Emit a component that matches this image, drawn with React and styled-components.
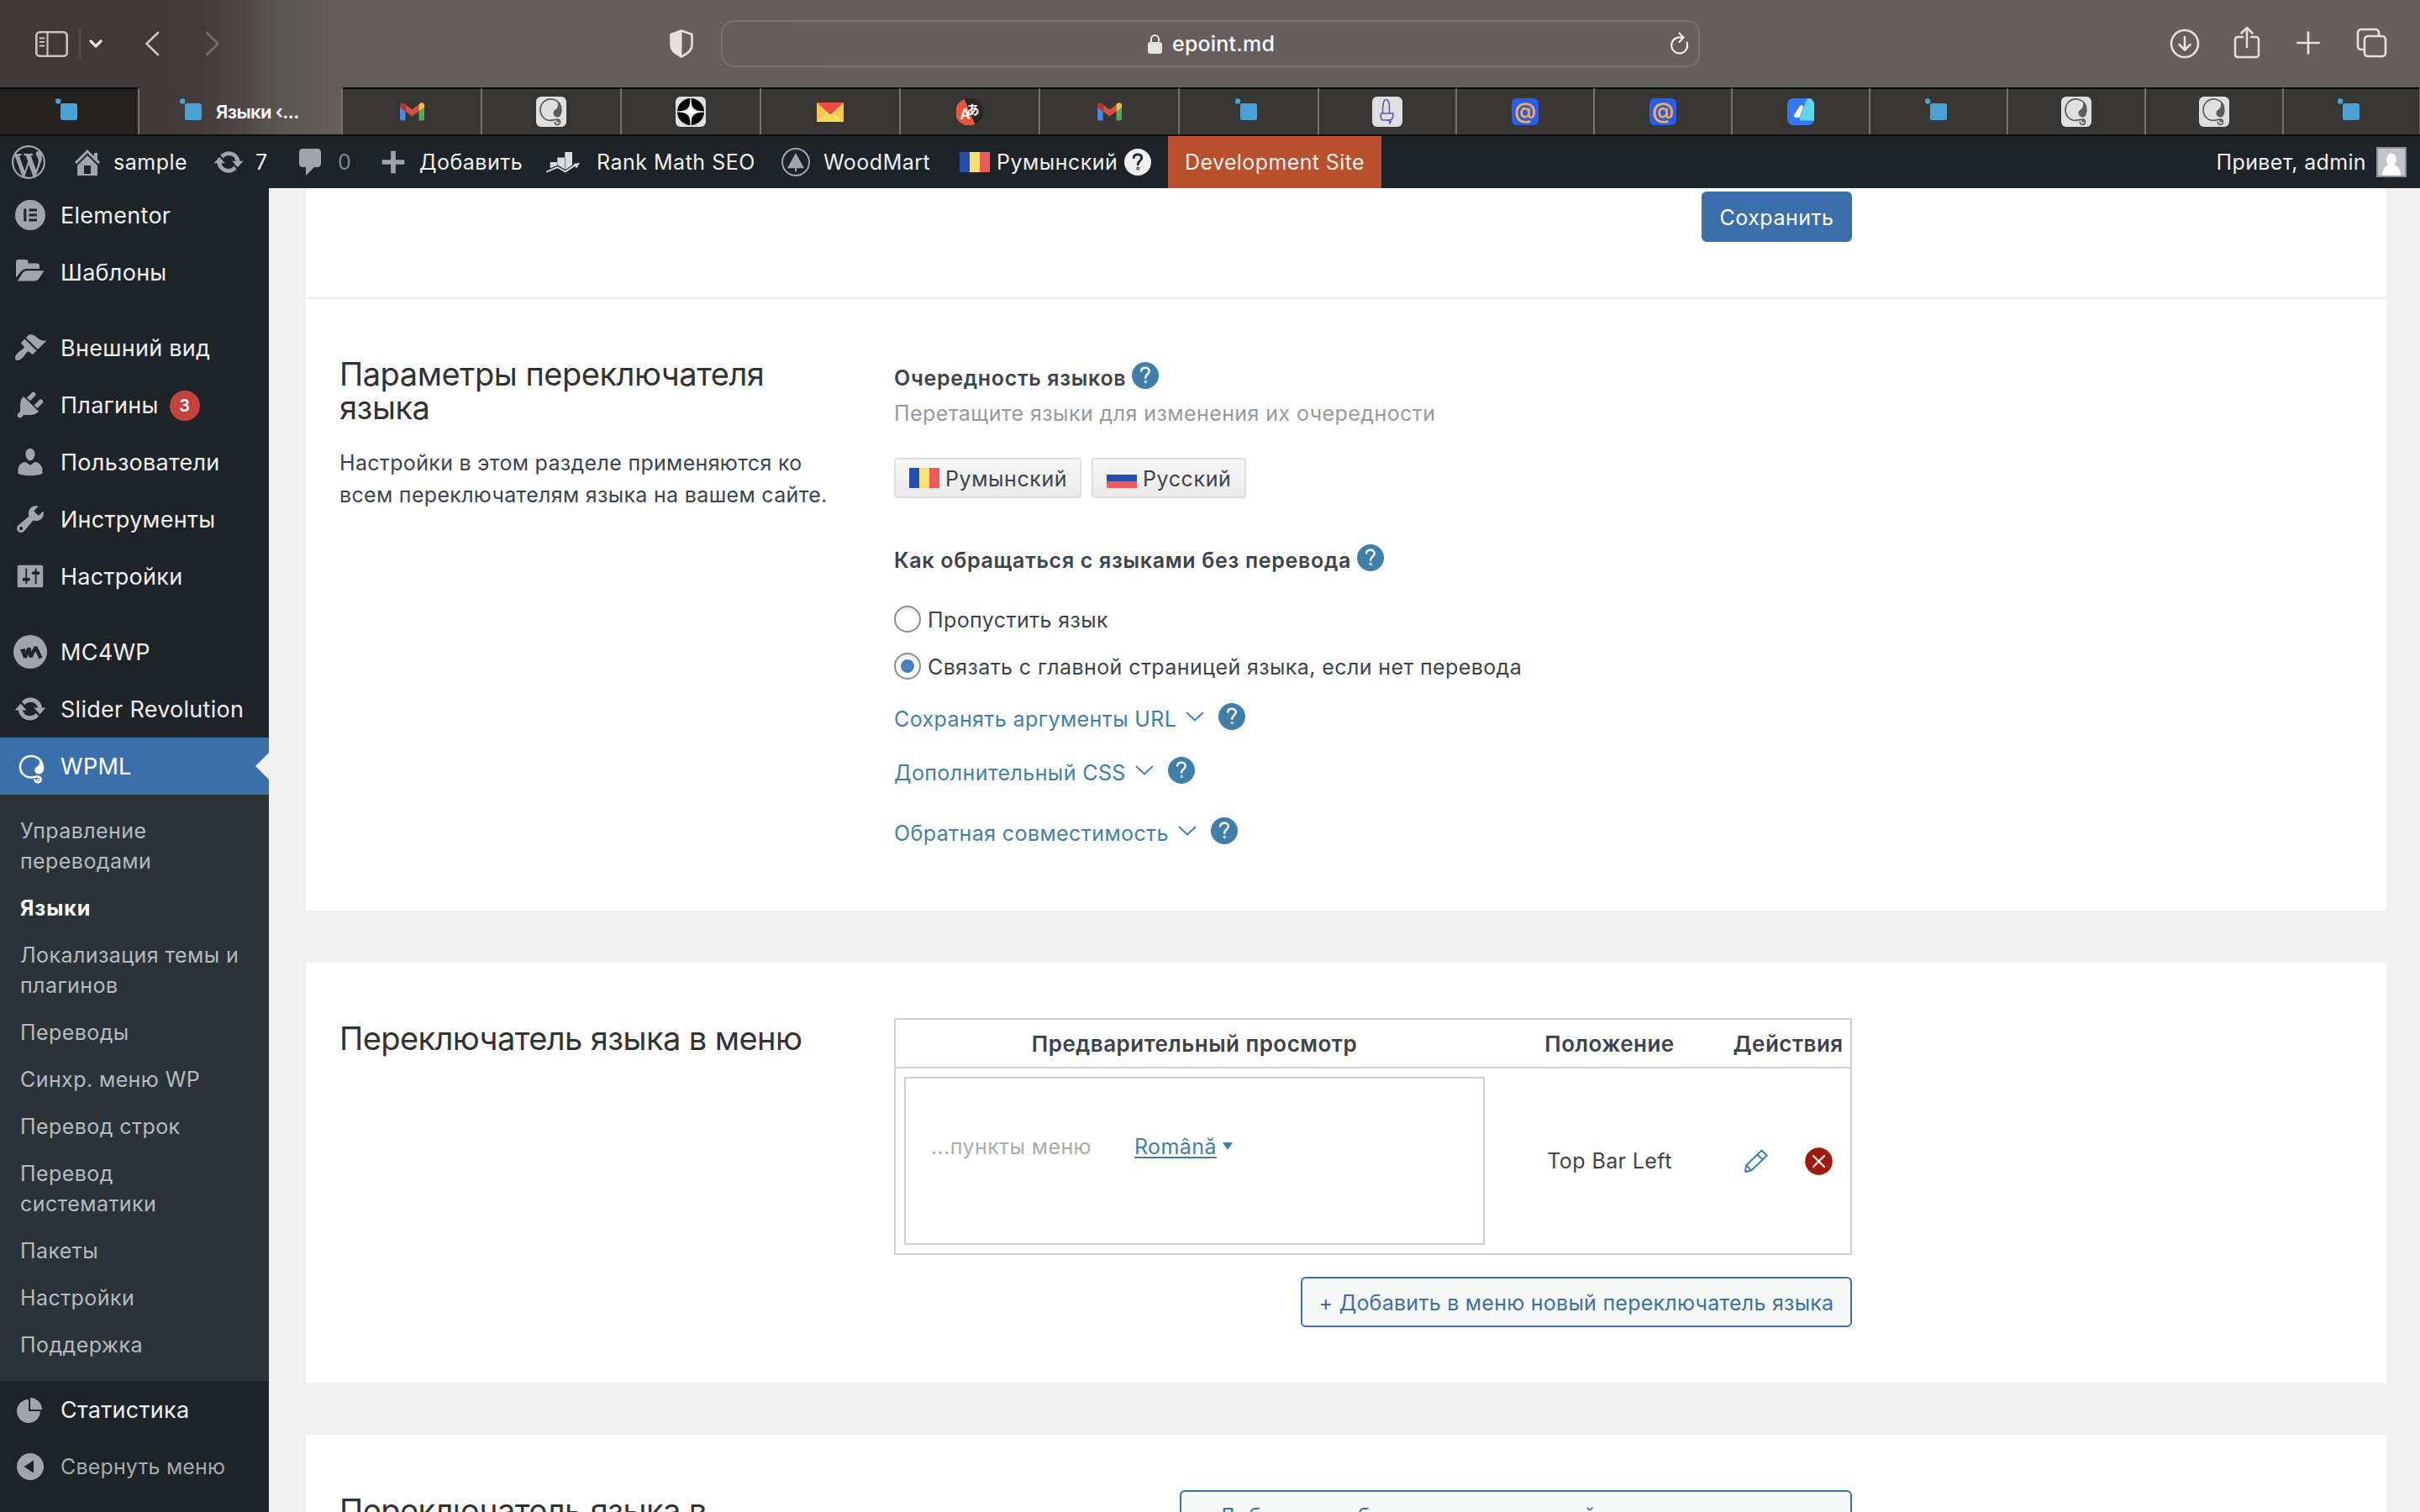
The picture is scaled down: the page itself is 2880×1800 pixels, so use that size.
import React from "react";
import styled, { createGlobalStyle, css } from "styled-components";

const GlobalStyle = createGlobalStyle`
  *, *::before, *::after { box-sizing: border-box; }
  html, body { margin: 0; padding: 0; background: #efefef; }
  body {
    font-family: Inter, Roboto, "Liberation Sans", sans-serif;
    font-size: 25px;
    letter-spacing: 0.4px;
    color: #3c434a;
    overflow: hidden;
  }
  svg { display: block; flex: none; }
  h2, p { margin: 0; }
`;

/* ---------- page shell ---------- */

const Page = styled.div`
  display: flex;
  flex-direction: column;
  width: 2880px;
  height: 1800px;
  overflow: hidden;
`;

const Chrome = styled.div`
  display: flex;
  flex-direction: column;
  height: 162px;
  background: linear-gradient(
    90deg,
    #3f3a39 0,
    #3f3a39 190px,
    #433c3b 240px,
    #4a4442 275px,
    #555150 315px,
    #5c5854 350px,
    #605b58 385px,
    #655e5d 430px,
    #665f5e 100%
  );
  border-bottom: 2px solid #0c0d0e;
`;

const Toolbar = styled.div`
  display: flex;
  align-items: center;
  height: 104px;
  padding-left: 42px;
  color: #e6e0e0;
`;

const ToolIcon = styled.div`
  display: flex;
  flex: none;
  margin-left: ${(p) => p.$gap || 0}px;
  color: ${(p) => p.$tone || "#e6e0e0"};
`;

const ToolDivider = styled.div`
  width: 2px;
  height: 36px;
  margin-left: 13px;
  background: #55504f;
`;

const AddressField = styled.div`
  display: flex;
  flex: none;
  align-items: center;
  width: 1165px;
  height: 56px;
  margin-left: 33px;
  padding-left: 506px;
  padding-right: 10px;
  border: 2px solid #777170;
  border-radius: 15px;
  color: #fff;
`;

const Address = styled.span`
  flex: 1;
  margin-left: 12px;
  font-weight: 500;
  letter-spacing: 0.2px;
`;

const TabStrip = styled.div`
  display: flex;
  height: 56px;
`;

const Tab = styled.div`
  display: flex;
  align-items: center;
  justify-content: ${(p) => (p.$active ? "flex-start" : "center")};
  width: ${(p) => p.$w}px;
  height: 56px;
  padding-left: ${(p) => (p.$active ? 48 : 0)}px;
  border-right: ${(p) => (p.$last ? 0 : 2)}px solid #777170;
  border-top: 2px solid ${(p) => (p.$active ? "transparent" : "#0c0b0b")};
  background: ${(p) => (p.$active ? "transparent" : p.$dark ? "#232120" : "#383634")};
`;

const TabTitle = styled.span`
  margin-left: 10px;
  color: #fff;
  font-size: 22px;
  font-weight: 600;
  letter-spacing: -0.6px;
  white-space: nowrap;
`;

/* ---------- admin bar ---------- */

const AdminBar = styled.div`
  display: flex;
  align-items: center;
  height: 62px;
  padding-left: 14px;
  padding-right: 16px;
  background: #1d2327;
  color: #f0f0f1;
  letter-spacing: 0.5px;
`;

const BarIcon = styled.div`
  display: flex;
  justify-content: center;
  width: ${(p) => p.$w}px;
  margin-left: ${(p) => p.$gap || 0}px;
  color: #a1a5aa;
`;

const BarText = styled.span`
  width: ${(p) => p.$w}px;
  margin-left: ${(p) => p.$gap}px;
  white-space: nowrap;
  color: ${(p) => (p.$dim ? "#85898c" : "#f0f0f1")};
`;

const DevSite = styled.div`
  display: flex;
  align-items: center;
  width: 254px;
  height: 62px;
  margin-left: 20px;
  padding-left: 20px;
  background: #ba4f2d;
  white-space: nowrap;
  letter-spacing: 0.4px;
`;

const Greeting = styled.span`
  margin-left: auto;
  margin-right: 12px;
  letter-spacing: 0.36px;
`;

const Avatar = styled.div`
  width: 36px;
  height: 36px;
  border: 2px solid #8c8f94;
  background: #c3c4c7;
`;

/* ---------- sidebar ---------- */

const Body = styled.div`
  display: flex;
  height: 1576px;
`;

const Sidebar = styled.nav`
  display: flex;
  flex: none;
  flex-direction: column;
  width: 320px;
  height: 1576px;
  background: #1d2327;
  overflow: hidden;
`;

const MenuGroup = styled.div`
  display: flex;
  flex-direction: column;
  margin-bottom: ${(p) => p.$after || 0}px;
  margin-top: ${(p) => p.$before || 0}px;
`;

const MenuRow = styled.div`
  position: relative;
  display: flex;
  align-items: center;
  flex: none;
  height: 68px;
  color: ${(p) => (p.$muted ? "#a7aaad" : p.$active ? "#fff" : "#f0f0f1")};
  background: ${(p) => (p.$active ? "#3b6fab" : "transparent")};
  font-size: ${(p) => (p.$muted ? 25 : 27)}px;
  letter-spacing: ${(p) => (p.$muted ? 0.16 : 0.28)}px;
  white-space: nowrap;
  ${(p) =>
    p.$active &&
    css`
      &::after {
        content: "";
        position: absolute;
        right: 0;
        top: 18px;
        border: 16px solid transparent;
        border-left-width: 0;
        border-right-color: #efefef;
      }
    `}
`;

const MenuIcon = styled.div`
  display: flex;
  align-items: center;
  justify-content: center;
  width: 72px;
  padding-top: ${(p) => (p.$active ? 9 : 0)}px;
  padding-left: ${(p) => (p.$active ? 2 : 0)}px;
  color: ${(p) => (p.$active ? "#fff" : "#a1a5aa")};
`;

const CountBadge = styled.span`
  display: flex;
  align-items: center;
  justify-content: center;
  width: 36px;
  height: 36px;
  margin-left: 13px;
  margin-top: 2px;
  border-radius: 50%;
  background: #c6423f;
  color: #fff;
  font-size: 20px;
  font-weight: 600;
  letter-spacing: 0;
`;

const SubMenu = styled.div`
  display: flex;
  flex: none;
  flex-direction: column;
  height: 698px;
  padding: 15px 0 0;
  background: #2c3338;
`;

const SubItem = styled.span`
  padding: 10px 24px;
  line-height: 36px;
  white-space: pre-line;
  color: ${(p) => (p.$current ? "#fff" : "#b6bbbf")};
  font-weight: ${(p) => (p.$current ? 700 : 400)};
  letter-spacing: ${(p) => (p.$current ? 0.9 : 0.42)}px;
`;

/* ---------- content ---------- */

const Content = styled.main`
  display: flex;
  flex: 1;
  flex-direction: column;
  gap: 62px;
  padding-left: 44px;
  padding-right: 40px;
`;

const Card = styled.section`
  flex: none;
  width: 2476px;
  height: ${(p) => p.$h}px;
  background: #fff;
`;

const SaveRow = styled.div`
  display: flex;
  justify-content: flex-end;
  height: 132px;
  padding-top: 4px;
  padding-right: 636px;
  border-bottom: 2px solid #ebebeb;
`;

const Button = styled.button`
  display: flex;
  align-items: center;
  justify-content: center;
  width: ${(p) => p.$w}px;
  height: 60px;
  padding: 2px 0 0;
  border: 2px solid #3b6fab;
  border-radius: 6px;
  background: ${(p) => (p.$primary ? "#3b6fab" : "#f6f7f7")};
  color: ${(p) => (p.$primary ? "#fff" : "#3b6fab")};
  font: inherit;
  letter-spacing: ${(p) => (p.$primary ? 0.5 : 0.25)}px;
  white-space: nowrap;
`;

const Section = styled.div`
  display: grid;
  grid-template-columns: 660px 1140px;
  align-items: start;
  padding-left: 40px;
`;

const Intro = styled.div`
  padding-top: ${(p) => p.$top}px;
`;

const Heading = styled.h2`
  color: #323232;
  font-size: 38px;
  font-weight: 400;
  line-height: 40px;
  letter-spacing: ${(p) => p.$tracking || -0.58}px;
  white-space: pre-line;
`;

const Lead = styled.p`
  margin-top: 27px;
  line-height: 38px;
  letter-spacing: 0.32px;
  white-space: pre-line;
`;

const Fields = styled.div`
  display: flex;
  flex-direction: column;
  align-items: ${(p) => (p.$end ? "flex-end" : "flex-start")};
  padding-top: ${(p) => p.$top}px;
`;

const FieldLine = styled.div`
  display: flex;
  align-items: center;
  height: 40px;
  margin-top: ${(p) => p.$gap || 0}px;
  white-space: nowrap;
`;

const Label = styled.span`
  font-weight: 600;
  letter-spacing: 0.69px;
`;

const Hint = styled.span`
  color: #999;
  letter-spacing: 0.43px;
`;

const HelpDot = styled.span`
  display: flex;
  align-items: center;
  justify-content: center;
  width: 32px;
  height: 32px;
  margin-left: ${(p) => p.$gap}px;
  margin-bottom: ${(p) => p.$lift}px;
  border-radius: 50%;
  background: ${(p) => p.$bg || "#407fab"};
  color: ${(p) => p.$fg || "#fff"};
`;

const LanguageList = styled.div`
  display: flex;
  gap: 12px;
  margin-top: 33px;
`;

const LanguageChip = styled.div`
  display: flex;
  align-items: center;
  width: ${(p) => p.$w}px;
  height: 48px;
  padding-left: 16px;
  gap: 7px;
  border: 2px solid #dedede;
  border-radius: 4px;
  background: linear-gradient(180deg, #f9f9f9, #e9e9e9);
  letter-spacing: 0.6px;
  white-space: nowrap;
`;

const ChipName = styled.span`
  padding-top: 2px;
`;

const Flag = styled.span`
  flex: none;
  width: 36px;
  height: 24px;
  background: ${(p) =>
    p.$code === "ro"
      ? "linear-gradient(90deg, #2350b0 0 12px, #fae26e 12px 24px, #ef5b5b 24px)"
      : "linear-gradient(180deg, #f0f0f0 0 8px, #2350b0 8px 16px, #ef5b5b 16px)"};
`;

const Radio = styled.span`
  display: flex;
  align-items: center;
  justify-content: center;
  width: 32px;
  height: 32px;
  margin-right: 8px;
  margin-bottom: 2px;
  border: 2px solid #8c8f94;
  border-radius: 50%;
  box-shadow: inset 0 2px 4px rgba(0, 0, 0, 0.1);
  &::after {
    content: "";
    width: 16px;
    height: 16px;
    border-radius: 50%;
    background: ${(p) => (p.$on ? "#4a7fc3" : "transparent")};
  }
`;

const LinkText = styled.span`
  color: #407fab;
`;

const Expand = styled.span`
  margin-left: 11px;
  margin-bottom: 7px;
  color: #407fab;
`;

const Table = styled.div`
  display: grid;
  grid-template-columns: 711px 277px 148px;
  grid-template-rows: 58px 220px;
  width: 1140px;
  height: 282px;
  border: 2px solid #d0d0d0;
`;

const HeadCell = styled.div`
  display: flex;
  align-items: center;
  justify-content: center;
  border-bottom: 2px solid #d0d0d0;
  font-weight: 600;
  font-size: 26px;
  letter-spacing: 0.48px;
`;

const Cell = styled.div`
  display: flex;
  align-items: center;
  justify-content: center;
  gap: ${(p) => p.$gap || 0}px;
`;

const Preview = styled.div`
  display: flex;
  align-items: flex-start;
  width: 691px;
  height: 200px;
  padding-top: 62px;
  padding-left: 30px;
  border: 2px solid #d0d0d0;
  line-height: 38px;
`;

const PreviewItems = styled.span`
  width: 242px;
  color: #aaa;
`;

const PreviewLink = styled.span`
  color: #407fab;
  text-decoration: underline;
  text-decoration-thickness: 2px;
  text-underline-offset: 3px;
`;

const Caret = styled.span`
  margin-left: 7px;
  margin-top: 14px;
  border: 6px solid transparent;
  border-top: 9px solid #407fab;
  border-bottom-width: 0;
`;

const AddRow = styled.div`
  margin-top: ${(p) => p.$gap}px;
`;

/* ---------- drawings ---------- */

const Dash = ({ d, size = 40 }) => (
  <svg width={size} height={size} viewBox="0 0 20 20" fill="currentColor">
    <path d={d} />
  </svg>
);

const dash = {
  wordpress:
    "M20 10c0-5.51-4.49-10-10-10C4.48 0 0 4.49 0 10c0 5.52 4.48 10 10 10 5.51 0 10-4.48 10-10zM7.78 15.37L4.37 6.22c.55-.02 1.17-.08 1.17-.08.5-.06.44-1.13-.06-1.11 0 0-1.45.11-2.37.11-.18 0-.37 0-.58-.01C4.12 2.69 6.87 1.11 10 1.11c2.33 0 4.45.87 6.05 2.34-.68-.11-1.65.39-1.65 1.58 0 .74.45 1.36.9 2.1.35.61.55 1.36.55 2.46 0 1.49-1.4 5-1.4 5l-3.03-8.37c.54-.02.82-.17.82-.17.5-.05.44-1.25-.06-1.22 0 0-1.44.12-2.38.12-.87 0-2.33-.12-2.33-.12-.5-.03-.56 1.2-.06 1.22l.92.08 1.26 3.41zM17.41 10c.24-.64.74-1.87.43-4.25.7 1.29 1.05 2.71 1.05 4.25 0 3.29-1.73 6.24-4.4 7.78.97-2.59 1.94-5.2 2.92-7.78zM6.1 18.09C3.12 16.65 1.11 13.53 1.11 10c0-1.3.23-2.48.72-3.59C3.25 10.3 4.67 14.2 6.1 18.09zm4.03-6.63l2.58 6.98c-.86.29-1.76.45-2.71.45-.79 0-1.57-.11-2.29-.33.81-2.38 1.62-4.74 2.42-7.1z",
  home: "M16 8.5l1.53 1.53-1.06 1.06L10 4.6l-6.47 6.49-1.06-1.06L10 2.5l4 4v-2h2v4zm-6-2.46l6 5.99V18H4v-5.97zM12 17v-5H8v5h4z",
  update:
    "M10.2 3.28c3.53 0 6.43 2.61 6.92 6h2.08l-3.5 4-3.5-4h2.32c-.45-1.97-2.21-3.45-4.32-3.45-1.45 0-2.73.71-3.54 1.78L4.95 5.66C6.23 4.2 8.11 3.28 10.2 3.28zm-.4 13.44c-3.52 0-6.43-2.61-6.92-6H.8l3.5-4c1.17 1.33 2.33 2.67 3.5 4H5.48c.45 1.97 2.21 3.45 4.32 3.45 1.45 0 2.73-.71 3.54-1.78l1.71 1.95c-1.28 1.46-3.15 2.38-5.25 2.38z",
  comment: "M5 2h9c1.1 0 2 .9 2 2v7c0 1.1-.9 2-2 2h-2l-5 5v-5H5c-1.1 0-2-.9-2-2V4c0-1.1.9-2 2-2z",
  plus: "M17 8.5v3h-5.5V17h-3v-5.5H3v-3h5.5V3h3v5.5z",
  appearance:
    "M14.48 11.06L7.41 3.99l1.5-1.5c.5-.56 2.3-.47 3.51.32 1.21.8 1.43 1.28 2.91 2.1 1.18.64 2.45 1.26 4.45.85zm-.71.71L6.7 4.7 4.93 6.47c-.39.39-.39 1.02 0 1.41l1.06 1.06c.39.39.39 1.03 0 1.42-.6.6-1.43 1.11-2.21 1.69-.35.26-.7.53-1.01.84C1.43 14.23.4 16.08 1.4 17.07c.99 1 2.84-.03 4.18-1.36.31-.31.58-.66.85-1.02.57-.78 1.08-1.61 1.69-2.21.39-.39 1.02-.39 1.41 0l1.06 1.06c.39.39 1.02.39 1.41 0z",
  plugins:
    "M13.11 4.36L9.87 7.6 8 5.73l3.24-3.24c.35-.34 1.05-.2 1.56.32.52.51.66 1.21.31 1.55zm-8 1.77l.91-1.12 9.01 9.01-1.19.84c-.71.71-2.63 1.16-3.82 1.16H6.14L4.9 17.26c-.59.59-1.54.59-2.12 0-.59-.58-.59-1.53 0-2.12l1.24-1.24v-3.88c0-1.13.4-3.19 1.09-3.89zm7.26 3.97l3.24-3.24c.34-.35 1.04-.21 1.55.31.52.51.66 1.21.31 1.55l-3.24 3.25z",
  users:
    "M10 9.25c-2.27 0-2.73-3.44-2.73-3.44C7 4.02 7.82 2 9.97 2c2.16 0 2.98 2.02 2.71 3.81 0 0-.41 3.44-2.68 3.44zm0 2.57L12.72 10c2.39 0 4.52 2.33 4.52 4.53v2.49s-3.65 1.13-7.24 1.13c-3.65 0-7.24-1.13-7.24-1.13v-2.49c0-2.25 1.94-4.48 4.47-4.48z",
  tools:
    "M16.68 9.77c-1.34 1.34-3.3 1.67-4.95.99l-5.41 6.52c-.99.99-2.59.99-3.58 0s-.99-2.59 0-3.57l6.52-5.42c-.68-1.65-.35-3.61.99-4.95 1.28-1.28 3.12-1.62 4.72-1.06l-2.89 2.89 2.82 2.82 2.86-2.87c.53 1.58.18 3.39-1.08 4.65zM3.81 16.21c.4.39 1.04.39 1.43 0 .4-.4.4-1.04 0-1.43-.39-.4-1.03-.4-1.43 0-.39.39-.39 1.03 0 1.43z",
  settings:
    "M18 16V4c0-.55-.45-1-1-1H3c-.55 0-1 .45-1 1v12c0 .55.45 1 1 1h14c.55 0 1-.45 1-1zM8 11h1c.55 0 1 .45 1 1s-.45 1-1 1H8v1.5c0 .28-.22.5-.5.5s-.5-.22-.5-.5V13H6c-.55 0-1-.45-1-1s.45-1 1-1h1V5.5c0-.28.22-.5.5-.5s.5.22.5.5V11zm5-2h-1c-.55 0-1-.45-1-1s.45-1 1-1h1V5.5c0-.28.22-.5.5-.5s.5.22.5.5V7h1c.55 0 1 .45 1 1s-.45 1-1 1h-1v5.5c0 .28-.22.5-.5.5s-.5-.22-.5-.5V9z",
  pie: "M10 10V3c3.87 0 7 3.13 7 7h-7zM9 4v7h7c0 3.87-3.13 7-7 7s-7-3.13-7-7 3.13-7 7-7z",
};

const ElementorIcon = () => (
  <svg width="36" height="36" viewBox="0 0 36 36">
    <circle cx="18" cy="18" r="18" fill="currentColor" />
    <path d="M10.3 10.5h3v15h-3zM16.5 10.5h9.4v3h-9.4zM16.5 16.5h9.4v3h-9.4zM16.5 22.5h9.4v3h-9.4z" fill="#1d2327" />
  </svg>
);

const FolderIcon = () => (
  <svg width="34" height="30" viewBox="0 0 34 30" fill="currentColor">
    <path d="M0 3a3 3 0 0 1 3-3h8.500a3 3 0 0 1 3 3v1.500H25a3 3 0 0 1 3 3V11H12.500a8 8 0 0 0-6 2.600L0 21.500z" />
    <path d="M12.600 13.200H33.500L27.500 22.500a7 7 0 0 1-5.800 3H1.800L8.200 15.600a5.500 5.500 0 0 1 4.400-2.400z" />
  </svg>
);

const McIcon = () => (
  <svg width="40" height="40" viewBox="0 0 40 40">
    <circle cx="20" cy="20" r="20" fill="currentColor" />
    <path
      d="M10.500 17.500l3.500 9 4.500-11 2 10.500 6-11.500 6 13"
      fill="none"
      stroke="#1d2327"
      strokeWidth="4.200"
      strokeLinejoin="bevel"
      strokeLinecap="butt"
    />
    <path d="M7 17.500l6.500-1.500 2 4z" fill="#1d2327" />
  </svg>
);

const Swirl = ({ size, color, blob }) => (
  <svg width={size} height={size} viewBox="0 0 36 36" fill="none" stroke={color} strokeLinecap="round">
    <path d="M29.500 12C28 6.500 23 2.900 17.500 2.900 10.300 2.900 5 8.800 5 15.800S10.200 28.400 17 28.400c3.500 0 6-1.300 8.500-1.300a3.100 3.100 0 1 1-3.200 3.600" strokeWidth="1.700" />
    <path d="M26 5.500c3.800 3.300 5.300 8.500 4.300 13.800-.8 4-3 5.700-5.600 5.200-2.800-.5-4.500-2.600-4.200-5.400.4-3.500 4.500-3.800 5.300-7.300.5-2 .3-4.200.2-6.300z" fill={blob} stroke="none" />
    <circle cx="25.800" cy="29.300" r="1.400" fill={blob} stroke="none" />
  </svg>
);

const WpmlMenuIcon = () => (
  <svg width="31" height="37" viewBox="1 0 32 38" fill="none" stroke="#fff" strokeLinecap="round">
    <path d="M30 11C28 5.500 22.500 2 16.500 2 9 2 3 8 3 15.300 3 22.700 9 28.300 16.500 28.300c4 0 6.500-1.600 9.500-.8 3.200 1 3.500 4.800 1 6.200-2.400 1.300-5.500.2-6-2.200" strokeWidth="2.600" />
    <path d="M27 6c4.500 3.500 6 8.500 5 13-1 4-3.500 5.500-6.500 5.200-3.200-.4-5-2.800-4.500-5.700.6-3.400 4.500-3.500 5.500-7 .5-1.800.5-3.700.5-5.500z" fill="#fff" stroke="none" />
    <circle cx="25" cy="31" r="1.500" fill="#fff" stroke="none" />
  </svg>
);

const CollapseIcon = () => (
  <svg width="32" height="32" viewBox="0 0 32 32">
    <circle cx="16" cy="16" r="16" fill="currentColor" />
    <path d="M20 8.500v15L8.500 16z" fill="#1d2327" />
  </svg>
);

const RankMathIcon = () => (
  <svg width="40" height="25" viewBox="0 0 40 25" fill="#dcdcdd">
    <path d="M4.700 12h8.600V6.500h9V0H31v15.500L22.800 21l-9-5.400-9.100 3.600z" />
    <path d="M13.300 12v4M22.600 6.500v14" stroke="#1d2327" strokeWidth="0.500" />
    <path d="M0 23.700l13.500-5.700 9.300 5.400 12-8" fill="none" stroke="#dcdcdd" strokeWidth="1.900" />
    <path d="M40 12.800l-7.500 1.300 3.500 5.300z" />
  </svg>
);

const WoodMartIcon = () => (
  <svg width="34" height="34" viewBox="0 0 34 34">
    <circle cx="17" cy="17" r="16" fill="none" stroke="currentColor" strokeWidth="2" />
    <path d="M17 6l10 18.300h-9v3.900h-2v-3.900H7z" fill="currentColor" />
  </svg>
);

const QuestionMark = ({ weight = 2.4 }) => (
  <svg width="16" height="22" viewBox="0 0 16 22" fill="none" stroke="currentColor" strokeWidth={weight} strokeLinecap="round">
    <path d="M3.200 5.600C3.400 3.200 5.300 1.800 8 1.800c2.800 0 4.800 1.600 4.800 4 0 3.800-4.600 3.700-4.600 8" />
    <circle cx="8.200" cy="18.500" r="0.500" />
  </svg>
);

const SidebarToggleIcon = () => (
  <svg width="39" height="31" viewBox="0 0 39 31" fill="none" stroke="currentColor">
    <rect x="1.300" y="1.300" width="36.400" height="28.400" rx="4" strokeWidth="2.600" />
    <path d="M14.500 1.500v28" strokeWidth="2.200" />
    <path d="M5.500 8.500h5M5.500 13h5M5.500 17.500h5" strokeWidth="1.800" strokeLinecap="round" />
  </svg>
);

const Stroke = ({ w, h, d, weight = 3 }) => (
  <svg width={w} height={h} viewBox={`0 0 ${w} ${h}`} fill="none" stroke="currentColor" strokeWidth={weight} strokeLinecap="round" strokeLinejoin="round">
    <path d={d} />
  </svg>
);

const ShieldIcon = () => (
  <svg width="28" height="34" viewBox="0 0 28 34">
    <path d="M14 1.500L26.500 6v12.500c0 6-5 10.500-12.500 14-7.500-3.500-12.500-8-12.500-14V6z" fill="none" stroke="currentColor" strokeWidth="2.600" strokeLinejoin="round" />
    <path d="M14.500 1.500v31C6.500 29 1.500 24.500 1.500 18.500V6z" fill="currentColor" />
  </svg>
);

const LockIcon = () => (
  <svg width="17" height="24" viewBox="0 0 17 24" fill="#e6e4e4">
    <rect x="0" y="10" width="17" height="14" rx="3" />
    <path d="M4 11V6.500a4.500 4.500 0 0 1 9 0V11" fill="none" stroke="#e6e4e4" strokeWidth="2" />
  </svg>
);

const CubeIcon = () => (
  <svg width="33" height="32" viewBox="0 0 33 32" fill="#4ba1d3">
    <rect x="6" y="6" width="20" height="20" rx="2.500" />
    <circle cx="3.200" cy="3.500" r="3.200" />
  </svg>
);

const GmailIcon = () => (
  <svg width="29" height="22" viewBox="0 0 29 22">
    <path d="M0 5.500l6.500 5V21.500H2a2 2 0 0 1-2-2z" fill="#4f86ec" />
    <path d="M29 5.500l-6.500 5V21.500H27a2 2 0 0 0 2-2z" fill="#58a55c" />
    <path d="M6.500 2.500l8 6 8-6v8l-8 6-8-6z" fill="#d84f3f" />
    <path d="M0 6V3.300C0 .5 3-.8 5 .9l1.500 1.200v8.600z" fill="#b8342a" />
    <path d="M29 6V3.300c0-2.800-3-4.100-5-2.400l-1.500 1.200v8.600z" fill="#f1bf42" />
  </svg>
);

const Tile = styled.div`
  display: flex;
  align-items: center;
  justify-content: center;
  width: ${(p) => p.$s || 36}px;
  height: ${(p) => p.$s || 36}px;
  border-radius: 6px;
  background: ${(p) => p.$bg || "#dfdfdf"};
`;

const StarIcon = () => (
  <svg width="32" height="32" viewBox="0 0 32 32">
    <circle cx="16" cy="16" r="16" fill="#000" />
    <path d="M16 0h.6c.1 7.500.8 9.800 3 11.900 2 2 4.800 3.300 12.400 3.500v1.200c-7.600.2-10.400 1.500-12.400 3.500-2.200 2.100-2.900 4.400-3 11.900h-1.200c-.1-7.500-.8-9.800-3-11.900-2-2-4.800-3.300-12.400-3.500v-1.200c7.600-.2 10.400-1.500 12.400-3.500 2.200-2.100 2.900-4.400 3-11.900z" fill="#fff" />
  </svg>
);

const EnvelopeIcon = () => (
  <svg width="32" height="23" viewBox="0 0 32 23">
    <rect width="32" height="23" fill="#f6c64f" />
    <path d="M0 23l13-12h6l13 12z" fill="#f9da5c" />
    <path d="M0 0h32L16 14.500z" fill="#ec4a3f" />
  </svg>
);

const TranslateIcon = () => (
  <svg width="32" height="32" viewBox="0 0 32 32">
    <circle cx="16" cy="16" r="16" fill="#282727" />
    <path d="M9.800 1.300L22.200 30.700A16 16 0 1 1 9.800 1.300z" fill="#e9573a" />
    <text x="4.500" y="24.500" fontFamily="Inter, sans-serif" fontWeight="600" fontSize="17" fill="#fff">A</text>
    <text x="12.500" y="18.500" fontFamily="'Noto Sans CJK JP', sans-serif" fontWeight="700" fontSize="15" fill="#fff">あ</text>
  </svg>
);

const ScribbleIcon = () => (
  <svg width="18" height="32" viewBox="0 0 18 32" fill="none" stroke="#6a53b5" strokeWidth="1.600" strokeLinejoin="round">
    <path d="M3.500 17.500C3.500 10 4 4 6 2c3-1.800 5.500 2 5.500 7.500v8.500H2c-1.300 0-1.300 8 2 8h7.500c3 0 4.500-3 4.500-8h-4.500" />
    <path d="M8.500 26l5 1.500-2.500 3" />
  </svg>
);

const At = styled.span`
  color: #f6b13c;
  font-size: 26px;
  font-weight: 600;
  line-height: 30px;
  letter-spacing: 0;
  margin-bottom: 3px;
`;

const BlueTileIcon = () => (
  <svg width="32" height="32" viewBox="0 0 32 32">
    <rect width="32" height="32" rx="7" fill="#3478f6" />
    <path d="M26 0c4 1 6 4 6 8v18.500H17.500c-2.500 0-3-1.500-2.500-3.500L21.500 5c1-3 2.500-4.500 4.500-5z" fill="#5fd4ea" />
    <path d="M15.500 8.500c2-.8 3.500 0 3.300 2.500L14.500 23h-4c-2 0-3-1.500-2.300-3.500z" fill="#fff" />
  </svg>
);

const PersonIcon = () => (
  <svg width="32" height="32" viewBox="0 0 32 32" fill="#fff">
    <ellipse cx="16" cy="13" rx="6" ry="7.500" />
    <path d="M5 32c0-7 4-12 8-13h6c4 1 8 6 8 13z" />
  </svg>
);

const PencilIcon = () => (
  <svg width="28" height="28" viewBox="0 0 28 28" fill="none" stroke="#407fab" strokeWidth="2" strokeLinejoin="round">
    <path d="M20.500 1.500l6.300 6.300L8 25.500 1 27l1-7.500z" />
    <path d="M15.500 6.500l6.300 6.300M2.500 19.500l6 6" />
  </svg>
);

const RemoveIcon = () => (
  <svg width="33" height="33" viewBox="0 0 33 33">
    <circle cx="16.500" cy="16.500" r="16.300" fill="#9c1c10" />
    <path d="M10 10l13 13M23 10L10 23" stroke="#fff" strokeWidth="2.200" strokeLinecap="round" />
  </svg>
);

/* ---------- data ---------- */

const WpmlTile = () => (
  <Tile>
    <Swirl size={36} color="#5a5b5d" blob="#5a5b5d" />
  </Tile>
);
const AtTile = () => (
  <Tile $s={32} $bg="#2b5cf0">
    <At>@</At>
  </Tile>
);

const tabs = [
  { w: 166, icon: <CubeIcon />, dark: true },
  { w: 242, icon: <CubeIcon />, title: "Языки ‹..." },
  { w: 166, icon: <GmailIcon /> },
  { w: 166, icon: <WpmlTile /> },
  { w: 166, icon: <Tile><StarIcon /></Tile> },
  { w: 166, icon: <EnvelopeIcon /> },
  { w: 166, icon: <TranslateIcon /> },
  { w: 166, icon: <GmailIcon /> },
  { w: 166, icon: <CubeIcon /> },
  { w: 164, icon: <Tile><ScribbleIcon /></Tile> },
  { w: 164, icon: <AtTile /> },
  { w: 164, icon: <AtTile /> },
  { w: 164, icon: <BlueTileIcon /> },
  { w: 164, icon: <CubeIcon /> },
  { w: 164, icon: <WpmlTile /> },
  { w: 164, icon: <WpmlTile /> },
  { w: 161, icon: <CubeIcon /> },
];

const menuTop = [
  { label: "Elementor", icon: <ElementorIcon /> },
  { label: "Шаблоны", icon: <FolderIcon /> },
];
const menuSite = [
  { label: "Внешний вид", icon: <Dash d={dash.appearance} /> },
  { label: "Плагины", icon: <Dash d={dash.plugins} />, count: 3 },
  { label: "Пользователи", icon: <Dash d={dash.users} /> },
  { label: "Инструменты", icon: <Dash d={dash.tools} /> },
  { label: "Настройки", icon: <Dash d={dash.settings} size={38} /> },
];
const menuPlugins = [
  { label: "MC4WP", icon: <McIcon /> },
  { label: "Slider Revolution", icon: <Dash d={dash.update} /> },
  { label: "WPML", icon: <WpmlMenuIcon />, active: true },
];
const submenu = [
  "Управление\nпереводами",
  "Языки",
  "Локализация темы и\nплагинов",
  "Переводы",
  "Синхр. меню WP",
  "Перевод строк",
  "Перевод\nсистематики",
  "Пакеты",
  "Настройки",
  "Поддержка",
];

const renderRows = (rows) =>
  rows.map((r) => (
    <MenuRow key={r.label} $active={r.active} $muted={r.muted}>
      <MenuIcon $active={r.active}>{r.icon}</MenuIcon>
      {r.label}
      {r.count && <CountBadge>{r.count}</CountBadge>}
    </MenuRow>
  ));

const Help = ({ gap, lift = 0 }) => (
  <HelpDot $gap={gap} $lift={lift}>
    <QuestionMark />
  </HelpDot>
);

const ExpandLink = ({ text, gap }) => (
  <FieldLine $gap={gap}>
    <LinkText>{text}</LinkText>
    <Expand>
      <Stroke w={22} h={12} d="M1.500 1.500L11 10.500l9.500-9" weight={1.800} />
    </Expand>
    <Help gap={17} lift={7} />
  </FieldLine>
);

export default function App() {
  return (
    <Page>
      <GlobalStyle />
      <Chrome>
        <Toolbar>
          <ToolIcon $tone="#c9c4c3"><SidebarToggleIcon /></ToolIcon>
          <ToolDivider />
          <ToolIcon $gap={10}><Stroke w={16} h={10} d="M2 2l6 6 6-6" weight={3.200} /></ToolIcon>
          <ToolIcon $gap={50} $tone="#c9c4c3"><Stroke w={18} h={30} d="M16 2L2.500 15 16 28" weight={2.800} /></ToolIcon>
          <ToolIcon $gap={54} $tone="#726b6a"><Stroke w={18} h={30} d="M2 2l13.500 13L2 28" weight={2.800} /></ToolIcon>
          <ToolIcon $gap={535}><ShieldIcon /></ToolIcon>
          <AddressField>
            <LockIcon />
            <Address>epoint.md</Address>
            <Stroke w={24} h={29} d="M20.500 12.500A9.500 9.500 0 1 1 12 6.500h3.500M11.500 1.500l5 5-5 5.500" weight={2} />
          </AddressField>
          <ToolIcon $gap={559}>
            <Stroke w={36} h={36} d="M18 2a16 16 0 1 0 0 32 16 16 0 1 0 0-32M18 10v15M11.500 19l6.500 6.500L24.500 19" weight={2.600} />
          </ToolIcon>
          <ToolIcon $gap={40}>
            <Stroke w={32} h={42} d="M11 13H5a3 3 0 0 0-3 3v18a3 3 0 0 0 3 3h22a3 3 0 0 0 3-3V16a3 3 0 0 0-3-3h-6M16 25V2M9.500 8.500L16 2l6.500 6.500" weight={2.500} />
          </ToolIcon>
          <ToolIcon $gap={43}><Stroke w={28} h={30} d="M14 1.500v25M1.500 14h25" weight={2.700} /></ToolIcon>
          <ToolIcon $gap={43}>
            <Stroke w={37} h={38} d="M14 10h17a4 4 0 0 1 4 4v16a4 4 0 0 1-4 4H14a4 4 0 0 1-4-4V14a4 4 0 0 1 4-4M10 26H6a4 4 0 0 1-4-4V6a4 4 0 0 1 4-4h17a4 4 0 0 1 4 4v4" weight={2.600} />
          </ToolIcon>
        </Toolbar>
        <TabStrip>
          {tabs.map((t, i) => (
            <Tab key={i} $w={t.w} $dark={t.dark} $active={!!t.title} $last={i === tabs.length - 1}>
              {t.icon}
              {t.title && <TabTitle>{t.title}</TabTitle>}
            </Tab>
          ))}
        </TabStrip>
      </Chrome>

      <AdminBar>
        <BarIcon $w={40}><Dash d={dash.wordpress} /></BarIcon>
        <BarIcon $w={40} $gap={30}><Dash d={dash.home} /></BarIcon>
        <BarText $w={88} $gap={11}>sample</BarText>
        <BarIcon $w={40} $gap={29}><Dash d={dash.update} size={38} /></BarIcon>
        <BarText $w={20} $gap={12}>7</BarText>
        <BarIcon $w={40} $gap={26}><Dash d={dash.comment} /></BarIcon>
        <BarText $w={20} $gap={12} $dim>0</BarText>
        <BarIcon $w={40} $gap={26}><Dash d={dash.plus} size={38} /></BarIcon>
        <BarText $w={122} $gap={11}>Добавить</BarText>
        <BarIcon $w={40} $gap={29}><RankMathIcon /></BarIcon>
        <BarText $w={190} $gap={20}>Rank Math SEO</BarText>
        <BarIcon $w={34} $gap={30}><WoodMartIcon /></BarIcon>
        <BarText $w={128} $gap={16}>WoodMart</BarText>
        <BarIcon $w={36} $gap={34}><Flag $code="ro" /></BarIcon>
        <BarText $w={145} $gap={8}>Румынский</BarText>
        <HelpDot $gap={7} $lift={0} $bg="#f0f0f1" $fg="#1d2327">
          <QuestionMark weight={2.800} />
        </HelpDot>
        <DevSite>Development Site</DevSite>
        <Greeting>Привет, admin</Greeting>
        <Avatar><PersonIcon /></Avatar>
      </AdminBar>

      <Body>
        <Sidebar>
          <MenuGroup $before={-2} $after={22}>{renderRows(menuTop)}</MenuGroup>
          <MenuGroup $after={22}>{renderRows(menuSite)}</MenuGroup>
          <MenuGroup>{renderRows(menuPlugins)}</MenuGroup>
          <SubMenu>
            {submenu.map((s) => (
              <SubItem key={s} $current={s === "Языки"}>{s}</SubItem>
            ))}
          </SubMenu>
          <MenuGroup>
            {renderRows([
              { label: "Статистика", icon: <Dash d={dash.pie} /> },
              { label: "Свернуть меню", icon: <CollapseIcon />, muted: true },
            ])}
          </MenuGroup>
        </Sidebar>

        <Content>
          <Card $h={860}>
            <SaveRow>
              <Button $w={179} $primary>Сохранить</Button>
            </SaveRow>
            <Section>
              <Intro $top={69}>
                <Heading $tracking={-0.48}>{"Параметры переключателя\nязыка"}</Heading>
                <Lead>{"Настройки в этом разделе применяются ко\nвсем переключателям языка на вашем сайте."}</Lead>
              </Intro>
              <Fields $top={74}>
                <FieldLine>
                  <Label>Очередность языков</Label>
                  <Help gap={7} lift={6} />
                </FieldLine>
                <FieldLine $gap={2}><Hint>Перетащите языки для изменения их очередности</Hint></FieldLine>
                <LanguageList>
                  <LanguageChip $w={223}><Flag $code="ro" /><ChipName>Румынский</ChipName></LanguageChip>
                  <LanguageChip $w={184}><Flag $code="ru" /><ChipName>Русский</ChipName></LanguageChip>
                </LanguageList>
                <FieldLine $gap={54}>
                  <Label>Как обращаться с языками без перевода</Label>
                  <Help gap={7} lift={6} />
                </FieldLine>
                <FieldLine $gap={31}><Radio />Пропустить язык</FieldLine>
                <FieldLine $gap={16}><Radio $on />Связать с главной страницей языка, если нет перевода</FieldLine>
                <ExpandLink text="Сохранять аргументы URL" gap={22} />
                <ExpandLink text="Дополнительный CSS" gap={24} />
                <ExpandLink text="Обратная совместимость" gap={32} />
              </Fields>
            </Section>
          </Card>

          <Card $h={500}>
            <Section>
              <Intro $top={70}><Heading>Переключатель языка в меню</Heading></Intro>
              <Fields $top={66} $end>
                <Table>
                  <HeadCell>Предварительный просмотр</HeadCell>
                  <HeadCell>Положение</HeadCell>
                  <HeadCell>Действия</HeadCell>
                  <Cell>
                    <Preview>
                      <PreviewItems>...пункты меню</PreviewItems>
                      <PreviewLink>Română</PreviewLink>
                      <Caret />
                    </Preview>
                  </Cell>
                  <Cell>Top Bar Left</Cell>
                  <Cell $gap={44}><PencilIcon /><RemoveIcon /></Cell>
                </Table>
                <AddRow $gap={26}>
                  <Button $w={656}>+ Добавить в меню новый переключатель языка</Button>
                </AddRow>
              </Fields>
            </Section>
          </Card>

          <Card $h={500}>
            <Section>
              <Intro $top={70}><Heading>{"Переключатель языка в\nобласти виджета"}</Heading></Intro>
              <Fields $top={66} $end>
                <Button $w={800}>+ Добавить в область виджета новый переключатель языка</Button>
              </Fields>
            </Section>
          </Card>
        </Content>
      </Body>
    </Page>
  );
}
